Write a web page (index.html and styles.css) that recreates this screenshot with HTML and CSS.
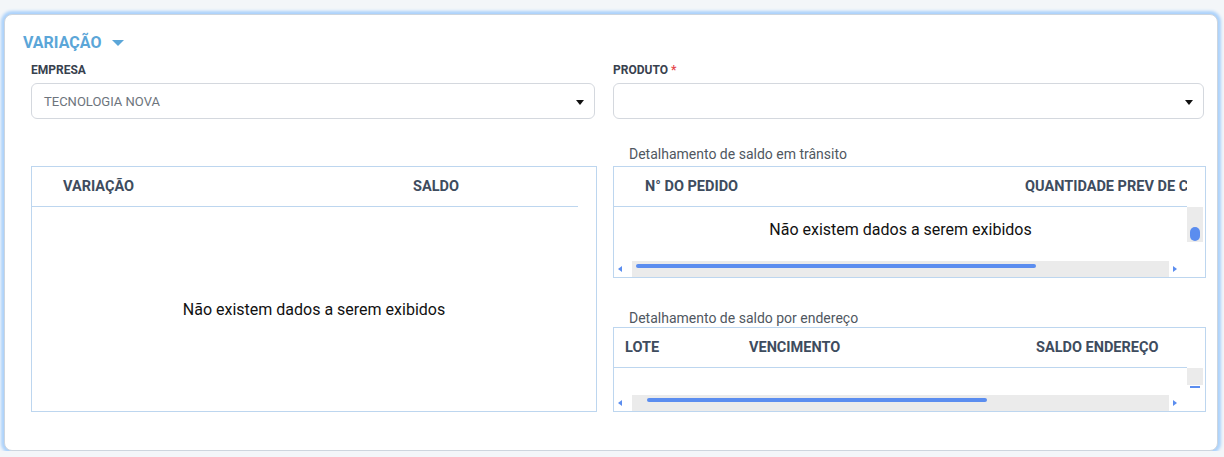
FILE: index.html
```html
<!DOCTYPE html>
<html lang="pt-BR">
<head>
  <meta charset="UTF-8">
  <meta name="viewport" content="width=device-width, initial-scale=1.0">
  <title>Variação</title>
  <link rel="stylesheet" href="styles.css">
</head>
<body>
  <div class="card">
    <div class="section-title">
      VARIAÇÃO
      <span class="title-caret"></span>
    </div>

    <div class="section-body">
      <div class="fields">
        <div class="field">
          <label class="field-label">EMPRESA</label>
          <div class="select">
            <span class="select-value">TECNOLOGIA NOVA</span>
            <span class="select-caret"></span>
          </div>
        </div>
        <div class="field">
          <label class="field-label">PRODUTO <span class="required">*</span></label>
          <div class="select">
            <span class="select-value"></span>
            <span class="select-caret"></span>
          </div>
        </div>
      </div>

      <div class="grids">
        <div class="left-col">
          <div class="grid grid-variacao">
            <div class="grid-header">
              <div class="col col-variacao">VARIAÇÃO</div>
              <div class="col">SALDO</div>
            </div>
            <div class="grid-empty">Não existem dados a serem exibidos</div>
          </div>
        </div>

        <div class="right-col">
          <div class="grid-caption">Detalhamento de saldo em trânsito</div>
          <div class="grid grid-transito">
            <div class="grid-header">
              <div class="col col-pedido">N° DO PEDIDO</div>
              <div class="col">QUANTIDADE PREV DE CHEGADA</div>
            </div>
            <div class="grid-body">
              <div class="grid-main">
                <div class="grid-message">Não existem dados a serem exibidos</div>
              </div>
              <div class="vscroll">
                <div class="vscroll-thumb"></div>
              </div>
            </div>
            <div class="hscroll">
              <div class="hscroll-arrow"><span class="arrow-left"></span></div>
              <div class="hscroll-track">
                <div class="hscroll-thumb thumb-transito"></div>
              </div>
              <div class="hscroll-arrow"><span class="arrow-right"></span></div>
              <div class="hscroll-corner"></div>
            </div>
          </div>

          <div class="grid-caption caption-endereco">Detalhamento de saldo por endereço</div>
          <div class="grid grid-endereco">
            <div class="grid-header header-endereco">
              <div class="col col-lote">LOTE</div>
              <div class="col col-vencimento">VENCIMENTO</div>
              <div class="col">SALDO ENDEREÇO</div>
            </div>
            <div class="grid-body body-endereco">
              <div class="grid-main"></div>
              <div class="vscroll-wrap">
                <div class="vscroll vscroll-short"></div>
                <div class="vscroll-line"></div>
              </div>
            </div>
            <div class="hscroll">
              <div class="hscroll-arrow"><span class="arrow-left"></span></div>
              <div class="hscroll-track">
                <div class="hscroll-thumb thumb-endereco"></div>
              </div>
              <div class="hscroll-arrow"><span class="arrow-right"></span></div>
              <div class="hscroll-corner"></div>
            </div>
          </div>
        </div>
      </div>
    </div>
  </div>
</body>
</html>
```

FILE: styles.css
```css
html, body {
  margin: 0;
  background-color: #f3f6f9;
}
body {
  font-family: Roboto, 'Liberation Sans', sans-serif;
  padding: 14px 6px 0 4px;
}
.card {
  box-sizing: border-box;
  width: 1214px;
  height: 437px;
  background-color: #fff;
  border: 1px solid #cdd5de;
  border-radius: 8px;
  box-shadow: 0 0 3px 3px #acd2fb;
  padding: 17px 11px 0 18px;
}
.section-title {
  display: flex;
  align-items: center;
  height: 20px;
  font-size: 16px;
  font-weight: 700;
  color: #5ba6d8;
}
.title-caret {
  width: 0;
  height: 0;
  margin-left: 11px;
  margin-top: 1px;
  border-left: 6px solid transparent;
  border-right: 6px solid transparent;
  border-top: 6px solid #5ba6d8;
}
.section-body {
  margin-left: 8px;
}
.fields {
  display: grid;
  grid-template-columns: 566px 593px;
  column-gap: 16px;
  margin-top: 11px;
}
.field-label {
  display: block;
  height: 14px;
  line-height: 14px;
  font-size: 12px;
  font-weight: 700;
  color: #38414e;
  margin-bottom: 6px;
}
.required {
  color: #e5484d;
}
.select {
  box-sizing: border-box;
  width: calc(100% - 2px);
  height: 36px;
  border: 1px solid #d4d8de;
  border-radius: 6px;
  display: flex;
  align-items: center;
  justify-content: space-between;
  padding: 0 10px 0 12px;
}
.select-value {
  font-size: 13px;
  color: #6d747c;
  padding-top: 1px;
}
.select-caret {
  width: 0;
  height: 0;
  border-left: 4.5px solid transparent;
  border-right: 4.5px solid transparent;
  border-top: 5px solid #111;
  margin-top: 2px;
}
.grids {
  display: grid;
  grid-template-columns: 566px 593px;
  column-gap: 16px;
  margin-top: 27px;
}
.left-col {
  padding-top: 20px;
}
.grid {
  box-sizing: border-box;
  border: 1px solid #bdd6ef;
  display: flex;
  flex-direction: column;
}
.grid-variacao {
  height: 246px;
}
.grid-transito {
  height: 112px;
}
.grid-endereco {
  height: 85px;
}
.grid-header {
  box-sizing: border-box;
  height: 40px;
  margin-right: 18px;
  border-bottom: 1px solid #bdd6ef;
  display: flex;
  align-items: center;
  padding-left: 31px;
  font-size: 14.5px;
  font-weight: 700;
  color: #3e4c5e;
  white-space: nowrap;
  overflow: hidden;
  flex-shrink: 0;
}
.col-variacao {
  width: 350px;
  flex-shrink: 0;
}
.col-pedido {
  width: 380px;
  flex-shrink: 0;
}
.header-endereco {
  padding-left: 11px;
}
.col-lote {
  width: 124px;
  flex-shrink: 0;
}
.col-vencimento {
  width: 287px;
  flex-shrink: 0;
}
.grid-empty {
  flex: 1;
  display: flex;
  align-items: center;
  justify-content: center;
  font-size: 16px;
  color: #111;
}
.grid-body {
  display: flex;
  height: 54px;
}
.body-endereco {
  height: 27px;
}
.grid-main {
  flex: 1;
}
.grid-message {
  height: 46px;
  line-height: 46px;
  text-align: center;
  font-size: 16px;
  color: #111;
}
.vscroll {
  width: 16px;
  height: 35px;
  margin-right: 2px;
  background-color: #ebebeb;
  display: flex;
  align-items: flex-end;
  justify-content: center;
}
.vscroll-thumb {
  width: 10px;
  height: 14px;
  border-radius: 5px;
  background-color: #5b8def;
  margin-bottom: 1px;
}
.vscroll-wrap {
  width: 16px;
  margin-right: 2px;
}
.vscroll-short {
  height: 17px;
  margin-right: 0;
}
.vscroll-line {
  height: 2px;
  margin: 1px 3px 0 3px;
  background-color: #5b8def;
}
.hscroll {
  display: flex;
  height: 16px;
  flex-shrink: 0;
}
.hscroll-arrow {
  width: 18px;
  display: flex;
  align-items: center;
  padding-left: 4px;
  box-sizing: border-box;
}
.arrow-left {
  width: 0;
  height: 0;
  border-top: 3.5px solid transparent;
  border-bottom: 3.5px solid transparent;
  border-right: 4px solid #5b8def;
}
.arrow-right {
  width: 0;
  height: 0;
  border-top: 3.5px solid transparent;
  border-bottom: 3.5px solid transparent;
  border-left: 4px solid #5b8def;
}
.hscroll-track {
  flex: 1;
  background-color: #ebebeb;
  padding-top: 3px;
}
.hscroll-thumb {
  height: 4px;
  border-radius: 2px;
  background-color: #5b8def;
}
.thumb-transito {
  margin-left: 4px;
  width: 400px;
}
.thumb-endereco {
  margin-left: 15px;
  width: 340px;
}
.hscroll-corner {
  width: 18px;
}
.grid-caption {
  height: 16px;
  line-height: 16px;
  font-size: 14px;
  color: #50575f;
  padding-left: 16px;
  margin-bottom: 4px;
}
.caption-endereco {
  margin-top: 32px;
  margin-bottom: 1px;
}
```
